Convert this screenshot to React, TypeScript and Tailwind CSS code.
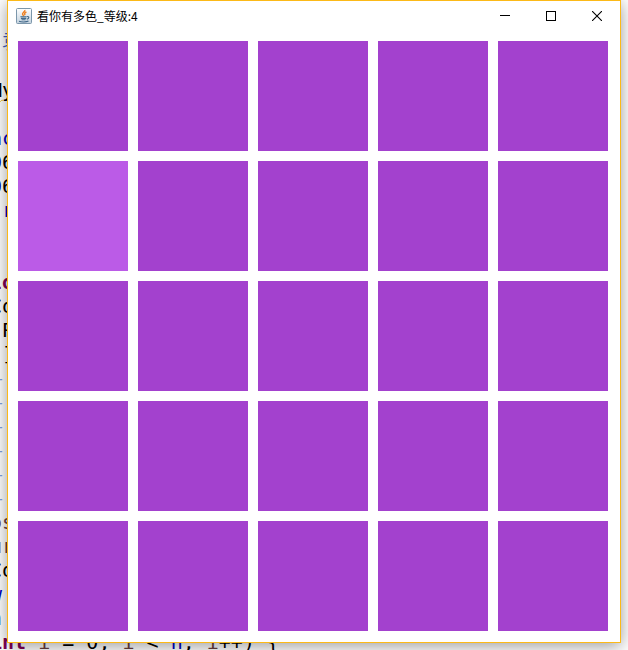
import React from "react";

type Token = { text: string; tone: string };
type Line = Token[];

const BLUE = "text-[#0000c0]";
const BLACK = "text-black";
const KEYWORD = "font-bold text-[#7f0055]";
const LOCAL = "text-[#6a3e3e]";
const DOC = "text-[#3f5fbf]";
const RULE = "text-[#7f9fdf]";

const codeLines: Line[] = [
  [],
  [{ text: " 袁", tone: DOC }],
  [],
  [{ text: "My", tone: "text-black underline decoration-wavy decoration-1 decoration-[#f4c82d] underline-offset-2" }],
  [],
  [{ text: "ac", tone: BLUE }],
  [{ text: "0", tone: BLUE }, { text: "6", tone: BLACK }],
  [{ text: "0", tone: BLUE }, { text: "6", tone: BLACK }],
  [{ text: " r", tone: BLUE }],
  [],
  [],
  [{ text: "lo", tone: KEYWORD }],
  [{ text: "Co", tone: BLACK }],
  [{ text: ".P", tone: BLACK }],
  [{ text: " ]", tone: BLACK }],
  [{ text: "—", tone: RULE }],
  [{ text: "—", tone: RULE }],
  [{ text: "—", tone: RULE }],
  [{ text: "—", tone: RULE }],
  [{ text: "—", tone: RULE }],
  [{ text: "—", tone: RULE }],
  [{ text: "os", tone: LOCAL }],
  [{ text: "ur", tone: LOCAL }],
  [{ text: "Co", tone: BLACK }],
  [{ text: "w", tone: BLUE }],
  [{ text: "n", tone: DOC }],
  [
    { text: "int", tone: KEYWORD },
    { text: " i", tone: LOCAL },
    { text: " = 0; ", tone: BLACK },
    { text: "i", tone: LOCAL },
    { text: " < ", tone: BLACK },
    { text: "n", tone: BLUE },
    { text: "; ", tone: BLACK },
    { text: "i", tone: LOCAL },
    { text: "++) {", tone: BLACK },
  ],
];

const TILE_COUNT = 25;
const ODD_TILE = 5;

function Editor() {
  return (
    <div
      aria-hidden="true"
      className="absolute inset-0 overflow-hidden bg-white pt-[6px] font-['DejaVu_Sans_Mono','Noto_Sans_CJK_SC',monospace] text-[20px] leading-6"
    >
      {codeLines.map((line, i) => (
        <div key={i} className="-ml-[10px] h-6 whitespace-pre">
          {line.map((t, j) => (
            <span key={j} className={t.tone}>
              {t.text}
            </span>
          ))}
        </div>
      ))}
    </div>
  );
}

function JavaIcon() {
  return (
    <svg width="16" height="16" viewBox="0 0 16 16" fill="none" aria-hidden="true">
      <defs>
        <linearGradient id="face" x1="0" y1="0" x2="0" y2="1">
          <stop offset="0" stopColor="#ffffff" />
          <stop offset="1" stopColor="#c3d2de" />
        </linearGradient>
      </defs>
      <rect x="0.5" y="0.5" width="15" height="15" rx="1" fill="url(#face)" stroke="#7c97ab" />
      <path
        d="M8.800 2c.8 1.600-3 2.500-2.200 4.400L7.800 8M10.400 4C8.400 4.800 8.200 5.800 9.100 7.200"
        stroke="#ee8122"
        strokeWidth="1.400"
      />
      <path
        d="M4.400 8.700h6.300M4.900 10.400h5.300M5.600 11.800h4M3 13.300c2.300.9 7.200.9 9.500-.2M11 8.700c2.400-.7 2.500 1.800-.2 2.600"
        stroke="#42698a"
        strokeWidth="1.100"
      />
    </svg>
  );
}

const controlClass =
  "flex h-full w-[46px] items-center justify-center text-black hover:bg-gray-200";

function TitleBar() {
  return (
    <header className="flex h-[29px] items-center pl-2">
      <JavaIcon />
      <h1 className="ml-[5px] flex-1 font-['Noto_Sans_CJK_SC',sans-serif] text-[12px] leading-4 text-black">
        看你有多色_等级:4
      </h1>
      <button type="button" aria-label="Minimize" className={controlClass}>
        <svg width="12" height="11" viewBox="0 0 12 11" shapeRendering="crispEdges">
          <rect x="1" y="5" width="10" height="1" fill="currentColor" />
        </svg>
      </button>
      <button type="button" aria-label="Maximize" className={controlClass}>
        <svg width="10" height="10" viewBox="0 0 10 10" fill="none" shapeRendering="crispEdges">
          <rect x="0.5" y="0.5" width="9" height="9" stroke="currentColor" />
        </svg>
      </button>
      <button type="button" aria-label="Close" className={controlClass}>
        <svg width="10" height="10" viewBox="0 0 10 10" fill="none">
          <path d="M0 0l10 10M10 0L0 10" stroke="currentColor" strokeWidth="1.100" />
        </svg>
      </button>
    </header>
  );
}

export default function App() {
  return (
    <div className="relative min-h-screen overflow-hidden">
      <Editor />
      <main className="relative mx-[7px] border border-[#fcb917] bg-white shadow-[0_3px_16px_rgba(0,0,0,0.4)]">
        <TitleBar />
        <div className="grid grid-cols-5 gap-[10px] pt-[11px] pr-3 pb-[11px] pl-[10px]">
          {Array.from({ length: TILE_COUNT }, (_, i) => (
            <button
              key={i}
              type="button"
              aria-label={`Tile ${i + 1}`}
              className={i === ODD_TILE ? "aspect-square bg-[#bb5be7]" : "aspect-square bg-[#a341ce]"}
            />
          ))}
        </div>
      </main>
    </div>
  );
}
